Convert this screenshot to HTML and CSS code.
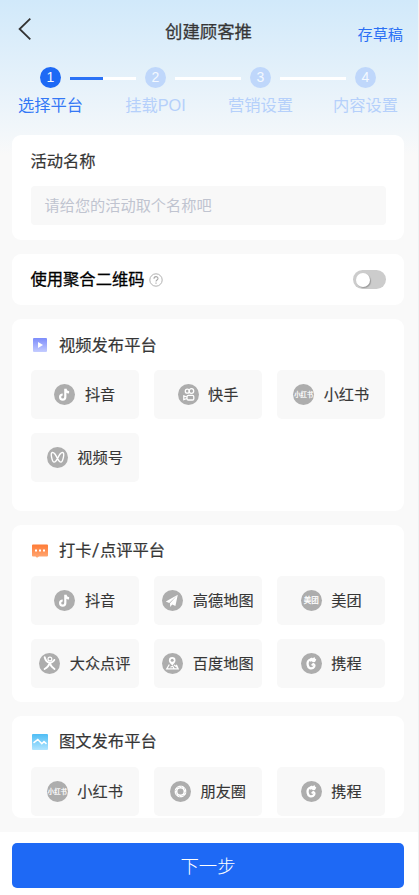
FILE: index.html
```html
<!DOCTYPE html>
<html lang="zh-CN">
<head>
<meta charset="utf-8">
<title>创建顾客推</title>
<link rel="stylesheet" href="styles.css">
</head>
<body>
<svg class="sprite" aria-hidden="true">
  <symbol id="douyin" viewBox="0 0 21 21"><circle cx="10.5" cy="10.5" r="10.5" fill="#adadad"/><path d="M11.300 4.800v8.300a2.600 2.600 0 1 1-2.600-2.600M11.400 5c.3 2.100 1.500 3.200 3.700 3.400" fill="none" stroke="#fff" stroke-width="2.200"/></symbol>
  <symbol id="kuaishou" viewBox="0 0 21 21"><circle cx="10.500" cy="10.500" r="10.500" fill="#adadad"/><g fill="none" stroke="#fff" stroke-width="1.300"><circle cx="9.300" cy="7.200" r="2"/><circle cx="13.400" cy="7" r="2.300"/><rect x="9" y="11.400" width="6.800" height="4.600" rx="1.300"/><path d="M9 13l-3.200-1.100v3.700L9 14.500"/></g></symbol>
  <symbol id="channels" viewBox="0 0 21 21"><circle cx="10.500" cy="10.500" r="10.500" fill="#adadad"/><path d="M10.500 11.600C9 8.300 6.600 5 5 5.700c-1.700.8.100 9.300 2.100 9.400 1.100.1 2.400-1.800 3.400-3.500 1 1.700 2.300 3.600 3.400 3.500 2-.1 3.800-8.600 2.100-9.400-1.600-.7-4 2.600-5.500 5.900z" fill="none" stroke="#fff" stroke-width="1.400"/></symbol>
  <symbol id="dianping" viewBox="0 0 21 21"><circle cx="10.500" cy="10.500" r="10.500" fill="#adadad"/><circle cx="10.900" cy="6" r="1.900" fill="none" stroke="#fff" stroke-width="1.200"/><path d="M5.700 4.300c.7 3 2.400 5 4.800 5.300 2.100.1 3.700-1 4.800-2.700M10.600 9.800c-.6 2.800-2.200 4.800-5 6.200M10.800 10.500c1.200 2.700 2.600 4.200 4.700 5.500" fill="none" stroke="#fff" stroke-width="1.900" stroke-linecap="round"/></symbol>
  <symbol id="amap" viewBox="0 0 21 21"><circle cx="10.500" cy="10.500" r="10.500" fill="#adadad"/><path d="M15.800 4.800L3.800 11.500l3.400 1.600zM15.800 4.800L8 13.300l.2 3.800 2-2.600 3.200 1.500z" fill="#fff"/></symbol>
  <symbol id="baidumap" viewBox="0 0 21 21"><circle cx="10.500" cy="10.500" r="10.500" fill="#adadad"/><path d="M10.300 12.600C7.400 9.700 6.900 8.800 6.900 7.300a3.300 3.300 0 0 1 6.600 0c0 1.500-.7 2.700-3.200 5.300z" fill="#fff"/><circle cx="10.200" cy="7.300" r="1.500" fill="#adadad"/><path d="M7.300 11.500l-2.600 4.400h11.500l-1.800-4.200M8.400 14.200l2.300-1 1.500 2.500M12 12l3.500 2.500" fill="none" stroke="#fff" stroke-width="1.200"/></symbol>
  <symbol id="ctrip" viewBox="0 0 21 21"><circle cx="10.500" cy="10.500" r="10.500" fill="#adadad"/><path d="M9.500 6.500C7 7.300 6.200 9.500 6.700 12c.5 3.300 3.500 4 5.500 2.700 1.700-1.100 1.500-3 .4-3.500" fill="none" stroke="#fff" stroke-width="2.300" stroke-linecap="round"/><path d="M8.500 5.900l2.400-1.300.9.700 1.700-1.300.5 1.600 1.300 1-1.300 2.300-2 .3-1.300-.9-1.500.4zM10 12l1.200-1.600 1.700-.2.500 1.600-1.200.3-.5 1z" fill="#fff"/></symbol>
  <symbol id="moments" viewBox="0 0 21 21"><circle cx="10.500" cy="10.500" r="10.500" fill="#adadad"/><circle cx="10.500" cy="10.500" r="4.500" fill="none" stroke="#fff" stroke-width="2.900"/><path d="M10 4l2.500 3.200M15 5.500l-.5 3.500M17 10.200l-3 2.300M15.200 15l-3.700-.6M10.800 17l-2.600-3.200M6 15.200l.4-3.700M4 10.700l3.200-2.500M6 5.900l3.600.6" stroke="#adadad" stroke-width=".4"/></symbol>
</svg>
<div class="app">
  <header class="top">
    <svg class="back" viewBox="0 0 14 24"><path d="M12.300 1.600L1.600 12l10.700 10.400" fill="none" stroke="#333" stroke-width="1.800"/></svg>
    <h1>创建顾客推</h1>
    <a class="draft">存草稿</a>
  </header>
  <ol class="steps">
    <li class="step active"><span class="num">1</span><span>选择平台</span></li>
    <li class="step"><span class="num">2</span><span>挂载POI</span></li>
    <li class="step"><span class="num">3</span><span>营销设置</span></li>
    <li class="step"><span class="num">4</span><span>内容设置</span></li>
  </ol>
  <main class="content">
    <section class="card name-card">
      <h2>活动名称</h2>
      <div class="input">请给您的活动取个名称吧</div>
    </section>
    <section class="card qr-card">
      <h2>使用聚合二维码</h2>
      <svg class="help" viewBox="0 0 14 14"><circle cx="7" cy="7" r="6.200" fill="none" stroke="#a8a8a8" stroke-width=".9"/><path d="M5 5.700C5 2.900 9 3 9 5.500c0 1.500-2 1.500-2 3M7 9.600v1.200" fill="none" stroke="#a8a8a8" stroke-width="1.100"/></svg>
      <span class="switch"></span>
    </section>
    <section class="card video-card">
      <div class="heading">
        <svg viewBox="0 0 16 16"><defs><linearGradient id="gv" x2="0" y2="1"><stop stop-color="#7c8cfb"/><stop offset="1" stop-color="#c4ccff"/></linearGradient></defs><rect x="1" y="1" width="14" height="14" rx="1" fill="url(#gv)"/><path d="M6 5l5 3-5 3z" fill="#fff"/></svg>
        <h2>视频发布平台</h2>
      </div>
      <div class="tiles">
        <div class="tile"><svg><use href="#douyin"/></svg><span>抖音</span></div>
        <div class="tile"><svg><use href="#kuaishou"/></svg><span>快手</span></div>
        <div class="tile"><b class="logo small">小红书</b><span>小红书</span></div>
        <div class="tile"><svg><use href="#channels"/></svg><span>视频号</span></div>
      </div>
    </section>
    <section class="card review-card">
      <div class="heading">
        <svg viewBox="0 0 16 16"><defs><linearGradient id="gr" x2="0" y2="1"><stop stop-color="#ff7b35"/><stop offset="1" stop-color="#ffa976"/></linearGradient></defs><path d="M1 1.500h14q1 0 1 1V12.500q0 1-1 1H7l-2 1.300L3.500 13.500H1q-1 0-1-1V2.500q0-1 1-1z" fill="url(#gr)"/><path d="M3 6.500h2v2H3zM7 6.500h2v2H7zM11 6.500h2v2h-2z" fill="#fff"/></svg>
        <h2>打卡<span class="slash">/</span>点评平台</h2>
      </div>
      <div class="tiles">
        <div class="tile"><svg><use href="#douyin"/></svg><span>抖音</span></div>
        <div class="tile"><svg><use href="#amap"/></svg><span>高德地图</span></div>
        <div class="tile"><b class="logo">美团</b><span>美团</span></div>
        <div class="tile"><svg><use href="#dianping"/></svg><span>大众点评</span></div>
        <div class="tile"><svg><use href="#baidumap"/></svg><span>百度地图</span></div>
        <div class="tile"><svg><use href="#ctrip"/></svg><span>携程</span></div>
      </div>
    </section>
    <section class="card image-card">
      <div class="heading">
        <svg viewBox="0 0 16 16"><defs><linearGradient id="gi" x2="0" y2="1"><stop stop-color="#4fbdf5"/><stop offset="1" stop-color="#b2e5ff"/></linearGradient></defs><rect width="16" height="16" rx="1" fill="url(#gi)"/><path d="M1.500 8.800L5.800 5.600l4 4.200 2.200-2.200 2.500 2.300" fill="none" stroke="#fff" stroke-width="1.500"/></svg>
        <h2>图文发布平台</h2>
      </div>
      <div class="tiles">
        <div class="tile"><b class="logo small">小红书</b><span>小红书</span></div>
        <div class="tile"><svg><use href="#moments"/></svg><span>朋友圈</span></div>
        <div class="tile"><svg><use href="#ctrip"/></svg><span>携程</span></div>
      </div>
    </section>
  </main>
  <footer class="footer"><button class="next">下一步</button></footer>
</div>
</body>
</html>
```
FILE: styles.css
```css
* { box-sizing: border-box; }
body {
  margin: 0;
  font-family: "Liberation Sans", "Noto Sans CJK SC", sans-serif;
  color: #363636;
  background: #f9f9f9;
}
h1, h2 { margin: 0; white-space: nowrap; }
h2 { font-size: 16.3px; line-height: 24px; font-weight: 400; -webkit-text-stroke: .2px currentColor; }
.sprite { display: none; }
.app {
  width: 419px;
  height: 895px;
  overflow: hidden;
  border-right: 1px solid #f1f2f3;
  background: linear-gradient(#d1e9fa 0, #f3f7fa 135px, #f9f9f9 155px);
}
.top {
  display: grid;
  grid-template-columns: 1fr auto 1fr;
  align-items: center;
  height: 64px;
  padding: 0 15px 0 18px;
}
.back { width: 14px; height: 24px; margin-top: -6px; }
.top h1 {
  margin-left: -4px;
  font-size: 17.4px;
  line-height: 26px;
  font-weight: 400;
  -webkit-text-stroke: .25px currentColor;
}
.draft { justify-self: end; margin-top: 5px; font-size: 15.2px; line-height: 22px; color: #2b70f5; }
.steps {
  display: grid;
  grid-template-columns: repeat(4, 105px);
  width: 420px;
  height: 71px;
  margin: 0 0 0 -2px;
  padding: 3px 0 0;
  list-style: none;
}
.step {
  position: relative;
  display: flex;
  flex-direction: column;
  align-items: center;
  gap: 5px;
  font-size: 16.3px;
  line-height: 24px;
  color: #b5d0fb;
}
.num {
  width: 21px;
  height: 21px;
  border-radius: 50%;
  background: #bfd7fb;
  color: #f4f9ff;
  font-size: 14px;
  line-height: 21px;
  text-align: center;
}
.step:not(:last-child)::after {
  content: "";
  position: absolute;
  left: 72px;
  top: 10px;
  width: 66px;
  height: 3px;
  background: #fff;
}
.step.active { color: #3478f6; }
.active .num { background: #1e69f5; }
.step.active::after { background: linear-gradient(90deg, #2b72f6 50%, #fff 50%); }
.content {
  display: flex;
  flex-direction: column;
  gap: 14px;
  height: 697px;
  padding: 0 14px 0 12px;
}
.card {
  flex: none;
  padding: 14px 18.5px 0 18.5px;
  border-radius: 9px;
  background: #fff;
  overflow: hidden;
}
.name-card { height: 105px; }
.input {
  height: 39px;
  margin-top: 13px;
  padding: 0 14px;
  border-radius: 4px;
  background: #f8f8f8;
  color: #c0c4d0;
  font-size: 15.2px;
  line-height: 39px;
}
.qr-card { display: flex; align-items: center; height: 51px; padding-top: 0; }
.qr-card h2 { padding-bottom: 1px; color: #000; -webkit-text-stroke-width: .3px; }
.help { width: 14px; height: 14px; margin-left: 5px; }
.switch {
  width: 33px;
  height: 19px;
  margin-left: auto;
  padding: 2.5px 3px;
  border-radius: 10px;
  background: #ccc;
}
.switch::before {
  content: "";
  display: block;
  width: 14px;
  height: 14px;
  border-radius: 50%;
  background: #fff;
  box-shadow: 1px 1px 1px #999;
}
.video-card { height: 192px; }
.review-card { height: 177px; }
.image-card { height: 102px; }
.heading { display: flex; align-items: center; gap: 11px; height: 24px; }
.heading svg { width: 16px; height: 16px; margin-left: 1.5px; }
.review-card h2, .image-card h2 { padding-bottom: 2px; }
.slash { margin: 0 .5px; font-family: Roboto, sans-serif; font-size: 18px; line-height: 20px; }
.tiles { display: grid; grid-template-columns: repeat(3, 1fr); gap: 14.5px; margin-top: 13px; }
.tile {
  display: flex;
  align-items: center;
  justify-content: center;
  gap: 9.5px;
  height: 48.5px;
  border-radius: 5px;
  background: #f8f8f8;
  font-size: 15.2px;
  line-height: 23px;
  white-space: nowrap;
  -webkit-text-stroke: .15px currentColor;
}
.tile svg, .logo { width: 21px; height: 21px; flex: none; }
.logo {
  display: flex;
  align-items: center;
  justify-content: center;
  border-radius: 50%;
  background: #adadad;
  color: #fff;
  font-size: 7.5px;
  font-weight: 500;
}
.logo.small { font-size: 6.3px; }
.footer { height: 63px; padding: 11px 14px 0 12px; background: #fff; }
.next {
  display: block;
  width: 100%;
  height: 45px;
  padding: 0;
  border: 0;
  border-radius: 5px;
  background: #1e69f5;
  color: #fff;
  font: 300 18.4px/45px "Noto Sans CJK SC", sans-serif;
}
```
